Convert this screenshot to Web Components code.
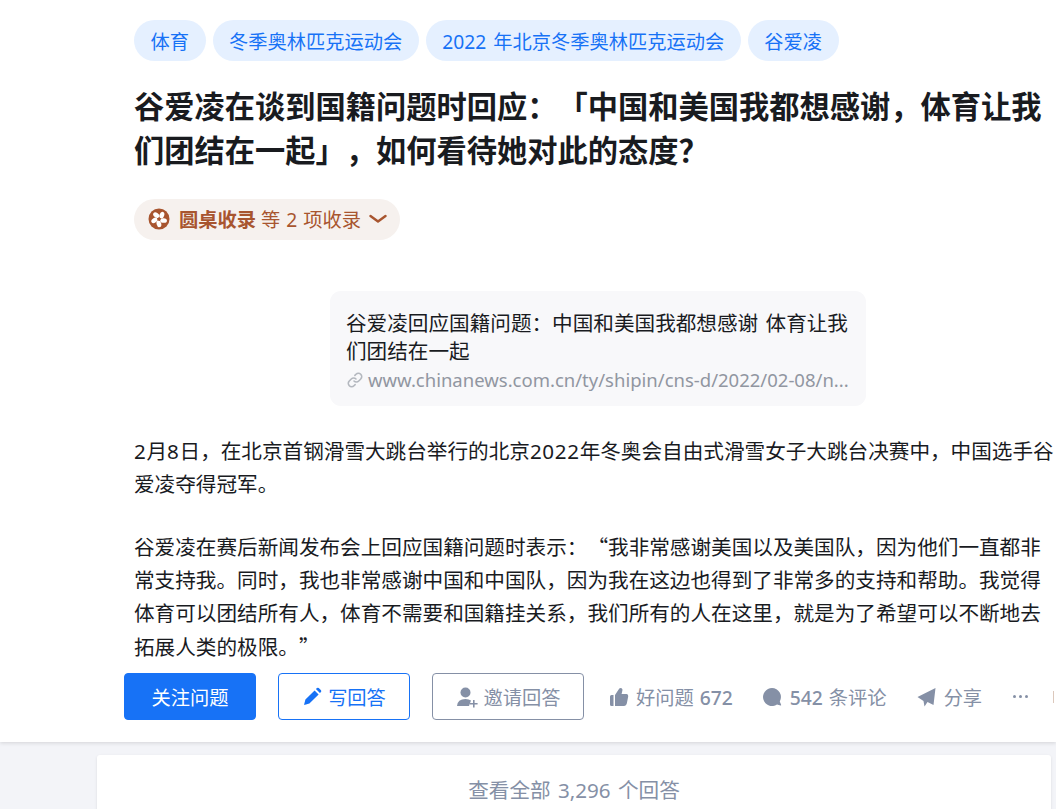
<!DOCTYPE html>
<html lang="zh">
<head>
<meta charset="utf-8">
<title>谷爱凌</title>
<style>
html, body { margin: 0; height: 100%; overflow: hidden; }
body { background: #f3f4f8; font-family: "Noto Sans", "Noto Sans CJK SC", sans-serif; color: #191b1f; text-spacing-trim: space-all; }
.cjk { font-family: "Noto Sans CJK SC", sans-serif; }
.d { letter-spacing: .65px; }
</style>
</head>
<body>
<question-page>
    <question-header>
        <topic-tag>体育</topic-tag>
        <topic-tag>冬季奥林匹克运动会</topic-tag>
        <topic-tag>2022 年北京冬季奥林匹克运动会</topic-tag>
        <topic-tag>谷爱凌</topic-tag>
        <span slot="title">谷爱凌在谈到国籍问题时回应：「中国和美国我都想感谢，体育让我们团结在一起」，如何看待她对此的态度？</span>
        <collect-pill slot="pill"></collect-pill>
        <link-card slot="body" heading="谷爱凌回应国籍问题：中国和美国我都想感谢 体育让我们团结在一起" url="www.chinanews.com.cn/ty/shipin/cns-d/2022/02-08/n..."></link-card>
        <p slot="body"><span class="d">2</span>月<span class="d">8</span>日，在北京首钢滑雪大跳台举行的北京<span class="d">2022</span>年冬奥会自由式滑雪女子大跳台决赛中，中国选手谷爱凌夺得冠军。</p>
        <p slot="body">谷爱凌在赛后新闻发布会上回应国籍问题时表示：<span class="cjk">“</span>我非常感谢美国以及美国队，因为他们一直都非常支持我。同时，我也非常感谢中国和中国队，因为我在这边也得到了非常多的支持和帮助。我觉得体育可以团结所有人，体育不需要和国籍挂关系，我们所有的人在这里，就是为了希望可以不断地去拓展人类的极限。<span class="cjk">”</span></p>
        <action-bar slot="actions"></action-bar>
    </question-header>
    <answer-link>查看全部 3,296 个回答</answer-link>
</question-page>

<script>
class QuestionPage extends HTMLElement {
    constructor() {
        super();
        this.attachShadow({mode: 'open'}).innerHTML = `
        <style>
        :host { display: flex; flex-direction: column; gap: 13px; width: 1056px; }
        </style>
        <slot></slot>`;
    }
}

class QuestionHeader extends HTMLElement {
    constructor() {
        super();
        this.attachShadow({mode: 'open'}).innerHTML = `
        <style>
        :host {
            display: block;
            height: 742px;
            box-sizing: border-box;
            padding: 20px 0 0 134px;
            background: #fff;
            box-shadow: 0 1px 4px rgba(18,18,18,.14);
            overflow: hidden;
        }
        .tags { display: flex; gap: 7px; height: 41px; }
        h1 {
            width: 928px;
            margin: 24px 0 0;
            font-size: 30.25px;
            line-height: 44px;
            font-weight: 700;
            color: #191b1f;
        }
        .pill { margin-top: 26px; height: 41px; }
        .body {
            width: 925px;
            margin-top: 51px;
            font-size: 20.625px;
            line-height: 33px;
            color: #191b1f;
        }
        ::slotted(p) { margin: 0 0 29px; }
        ::slotted(p:last-of-type) { margin-bottom: 9px; }
        .actions { margin-left: -10px; }
        </style>
        <div class="tags"><slot></slot></div>
        <h1><slot name="title"></slot></h1>
        <div class="pill"><slot name="pill"></slot></div>
        <div class="body"><slot name="body"></slot></div>
        <div class="actions"><slot name="actions"></slot></div>`;
    }
}

class TopicTag extends HTMLElement {
    constructor() {
        super();
        this.attachShadow({mode: 'open'}).innerHTML = `
        <style>
        :host {
            display: inline-flex;
            align-items: center;
            height: 41px;
            padding: 0 16.5px;
            border-radius: 21px;
            background: #e5f0ff;
            color: #1772f6;
            font-size: 19.25px;
            word-spacing: 2px;
            white-space: nowrap;
        }
        </style>
        <slot></slot>`;
    }
}

class CollectPill extends HTMLElement {
    constructor() {
        super();
        this.attachShadow({mode: 'open'}).innerHTML = `
        <style>
        :host {
            display: inline-flex;
            align-items: center;
            box-sizing: border-box;
            height: 41px;
            padding: 0 13px 1px 14px;
            border-radius: 21px;
            background: #f6f1ee;
            color: #a8552f;
            font-size: 19.25px;
            word-spacing: 1px;
            white-space: nowrap;
        }
        b { margin: 0 5px 0 9px; font-weight: 700; }
        svg { display: block; flex: none; }
        .chev { margin-left: 8px; }
        </style>
        <svg width="22" height="22" viewBox="0 0 22 22">
            <circle cx="11" cy="11" r="10.5" fill="#a8552f"/>
            <g fill="#fff">
                <ellipse cx="12.4" cy="6.4" rx="2.3" ry="3.4" transform="rotate(20 11 11)"/>
                <ellipse cx="12.4" cy="6.4" rx="2.3" ry="3.4" transform="rotate(92 11 11)"/>
                <ellipse cx="12.4" cy="6.4" rx="2.3" ry="3.4" transform="rotate(164 11 11)"/>
                <ellipse cx="12.4" cy="6.4" rx="2.3" ry="3.4" transform="rotate(236 11 11)"/>
                <ellipse cx="12.4" cy="6.4" rx="2.3" ry="3.4" transform="rotate(308 11 11)"/>
            </g>
            <circle cx="11" cy="11" r="1.6" fill="#a8552f"/>
        </svg>
        <b>圆桌收录</b><span>等 2 项收录</span>
        <svg class="chev" width="18" height="10" viewBox="0 0 18 10"><path d="M1.5 2 L9 7.5 L16.5 2" fill="none" stroke="#a8552f" stroke-width="2.4" stroke-linecap="round" stroke-linejoin="round"/></svg>`;
    }
}

class LinkCard extends HTMLElement {
    constructor() {
        super();
        this.attachShadow({mode: 'open'}).innerHTML = `
        <style>
        :host {
            display: block;
            box-sizing: border-box;
            width: 536px;
            height: 115px;
            margin: 0 0 29px 196px;
            padding: 18px 17px 0 16px;
            border-radius: 11px;
            background: #f8f8fa;
        }
        .t { font-size: 20.625px; line-height: 28px; color: #191b1f; word-spacing: 2px; }
        .u {
            display: flex;
            align-items: center;
            gap: 5px;
            height: 29px;
            font-size: 18.5px;
            color: #9196a1;
            white-space: nowrap;
            overflow: hidden;
        }
        svg { flex: none; margin-left: 1px; }
        </style>
        <div class="t">${this.getAttribute('heading')}</div>
        <div class="u">
            <svg width="16" height="16" viewBox="0 0 24 24" fill="none" stroke="#b4b8bf" stroke-width="2.4" stroke-linecap="round">
                <path d="M10.5 13.5a5 5 0 0 0 7.1 0l3-3a5 5 0 0 0-7.1-7.1l-1.7 1.7"/>
                <path d="M13.5 10.5a5 5 0 0 0-7.1 0l-3 3a5 5 0 0 0 7.1 7.1l1.7-1.7"/>
            </svg>
            <span>${this.getAttribute('url')}</span>
        </div>`;
    }
}

class ActionBar extends HTMLElement {
    constructor() {
        super();
        this.attachShadow({mode: 'open'}).innerHTML = `
        <style>
        :host {
            display: flex;
            align-items: center;
            width: 950px;
            height: 47px;
            font-size: 19.25px;
            white-space: nowrap;
        }
        .btn {
            display: flex;
            flex: none;
            align-items: center;
            justify-content: center;
            gap: 6px;
            box-sizing: border-box;
            width: 132px;
            height: 47px;
            margin-right: 22px;
            border: 1px solid #1772f6;
            border-radius: 4px;
            color: #1772f6;
        }
        .primary { background: #1772f6; color: #fff; }
        .grey { width: 152px; border-color: #8590a6; color: #8590a6; margin-right: 25px; }
        .plain { display: flex; flex: none; align-items: center; gap: 7px; color: #8590a6; margin-right: 29px; word-spacing: 1px; }
        .num { font-weight: 500; }
        svg { display: block; flex: none; }
        .more { display: flex; flex: none; gap: 3px; margin-right: 25px; }
        .more i { width: 3px; height: 3px; border-radius: 50%; background: #8590a6; }
        .edge { flex: none; width: 3px; height: 12px; border-left: 1px solid #dcc8bc; }
        </style>
        <div class="btn primary">关注问题</div>
        <div class="btn">
            <svg width="20" height="20" viewBox="0 0 20 20"><path d="M2 18 L3.4 12.6 L12.6 3.4 L16.6 7.4 L7.4 16.6 Z M13.9 2.1 L15 1 Q15.9 .4 16.8 1 L19 3.2 Q19.6 4.1 19 5 L17.9 6.1 Z" fill="#1772f6"/></svg>
            <span>写回答</span>
        </div>
        <div class="btn grey">
            <svg width="22" height="22" viewBox="0 0 22 22" fill="#8590a6">
                <circle cx="9.5" cy="6.5" r="5"/>
                <path d="M1 20 Q1.5 13 9.5 13 Q13 13 15 14.5 L13 20 Z"/>
                <path d="M17 14 h1.6 v3 h3 v1.6 h-3 v3 h-1.6 v-3 h-3 v-1.6 h3 Z"/>
            </svg>
            <span>邀请回答</span>
        </div>
        <div class="plain">
            <svg width="20" height="20" viewBox="0 0 20 20" fill="#8590a6"><path d="M1 9.5 Q1 8 2.5 8 H4.5 V19 H2.5 Q1 19 1 17.5 Z M6 8 L10.3 1.6 Q11.3 .5 12.6 1.2 Q13.8 2 13.4 3.6 L12.6 7 H17.6 Q19.6 7.2 19.2 9.4 L17.8 16.6 Q17.4 19 15.2 19 H6 Z"/></svg>
            <span>好问题 <span class="num">672</span></span>
        </div>
        <div class="plain" style="gap:8px;margin-right:30px">
            <svg width="20" height="20" viewBox="0 0 20 20" fill="#8590a6"><path d="M10 1 A9 9 0 1 0 15 17.5 L18.6 18.6 Q19.4 18.6 19 17.6 L17.8 14.4 A9 9 0 0 0 10 1 Z"/></svg>
            <span><span class="num">542</span> 条评论</span>
        </div>
        <div class="plain" style="gap:8px;margin-right:31px">
            <svg width="19" height="20" viewBox="0 0 19 20" fill="#8590a6"><path d="M.5 10 L18.5 1 L16.5 18 L10.5 15 L7.5 19.5 L6.5 14 Z"/></svg>
            <span>分享</span>
        </div>
        <div class="more"><i></i><i></i><i></i></div>
        <div class="edge"></div>`;
    }
}

class AnswerLink extends HTMLElement {
    constructor() {
        super();
        this.attachShadow({mode: 'open'}).innerHTML = `
        <style>
        :host {
            display: flex;
            justify-content: center;
            box-sizing: border-box;
            width: 954px;
            height: 70px;
            margin-left: 97px;
            padding-top: 19px;
            border-radius: 3px 3px 0 0;
            background: #fff;
            color: #8590a6;
            font-size: 20.625px;
            word-spacing: 2px;
            line-height: 33px;
            box-shadow: 0 1px 3px rgba(18,18,18,.1);
        }
        </style>
        <slot></slot>`;
    }
}

customElements.define('question-page', QuestionPage);
customElements.define('question-header', QuestionHeader);
customElements.define('topic-tag', TopicTag);
customElements.define('collect-pill', CollectPill);
customElements.define('link-card', LinkCard);
customElements.define('action-bar', ActionBar);
customElements.define('answer-link', AnswerLink);
</script>
</body>
</html>
